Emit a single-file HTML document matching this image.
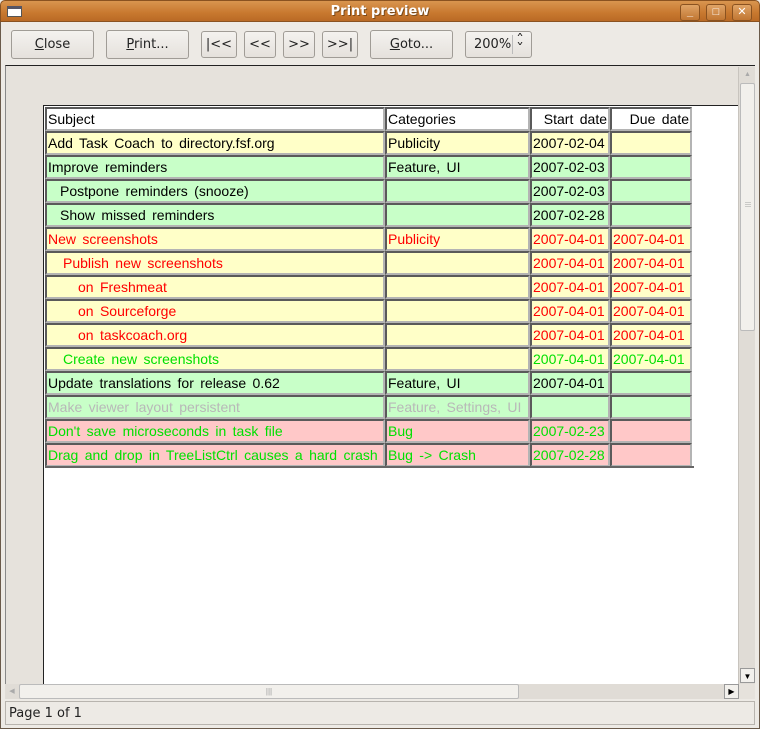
<!DOCTYPE html>
<html><head><meta charset="utf-8"><style>
*{margin:0;padding:0;box-sizing:border-box}
body{width:760px;height:729px;background:#edeae5;font-family:"Liberation Sans","DejaVu Sans",sans-serif;position:relative;overflow:hidden}
.abs{position:absolute}
#title{left:0;top:0;width:760px;height:22px;background:linear-gradient(#d9954f,#c8782f 60%,#b96a25);border-radius:5px 5px 0 0;border:1px solid #8a5220}
#title .t{position:absolute;left:0;right:0;top:3px;text-align:center;color:#fff;font-weight:bold;font-size:13px;font-family:"DejaVu Sans",sans-serif;text-shadow:1px 1px 0 #7a4a1a}
.wb{position:absolute;top:3px;width:20px;height:17px;border:1px solid #8a5220;border-radius:3px;background:linear-gradient(#e0a466,#c17632);color:#fff;font-size:11px;text-align:center;line-height:15px;font-weight:bold}
.btn{position:absolute;top:30px;height:29px;border:1px solid #a09c96;border-radius:3px;background:linear-gradient(#f4f2ef,#e5e1dc);font-size:13px;font-family:"DejaVu Sans",sans-serif;text-align:center;line-height:27px;color:#222}
#scrollarea{left:5px;top:65px;width:750px;height:634px;background:#e6e2dc;border-top:1px solid #222;border-left:1px solid #888}
#page{left:43px;top:105px;width:697px;height:579px;background:#fff;border-left:1px solid #222;border-top:1px solid #222}
.c{position:absolute;height:24px;border-top:2px solid #5a5a5a;border-left:2px solid #5a5a5a;border-bottom:2px solid #b4b4b4;border-right:2px solid #b4b4b4;font-size:14px;line-height:21px;word-spacing:2.5px;white-space:nowrap;overflow:hidden;padding-left:1px}
.r{text-align:right;padding-right:1px;padding-left:0}
.y{background:#ffffc8}.g{background:#c8ffc8}.p{background:#ffc8c8}.w{background:#fff}
.red{color:#f00}.grn{color:#00e000}.gry{color:#b8b8b8}
#vs{left:738px;top:67px;width:17px;height:617px;background:#e0dcd6;border-left:1px solid #c8c4be}
#hs{left:5px;top:684px;width:733px;height:15px;background:#e0dcd6}
#status{left:5px;top:701px;width:750px;height:24px;border:1px solid #b8b4ae;font-size:13px;font-family:"DejaVu Sans",sans-serif;padding:4px 0 0 3px;color:#222}
</style></head><body>
<div id="title" class="abs"><div style="position:absolute;left:6px;top:5px;width:15px;height:11px;background:#fff;border:1px solid #555;border-top:3px solid #556"></div><div class="t">Print preview</div>
<div class="wb" style="left:679px">_</div><div class="wb" style="left:705px">□</div><div class="wb" style="left:731px">✕</div></div>
<div class="abs" style="left:0;top:22px;width:1px;height:707px;background:#6a5a4a"></div>
<div class="abs" style="left:759px;top:22px;width:1px;height:707px;background:#6a5a4a"></div>
<div class="abs" style="left:0;top:728px;width:760px;height:1px;background:#6a5a4a"></div>
<div class="btn" style="left:11px;width:83px"><u>C</u>lose</div>
<div class="btn" style="left:106px;width:83px"><u>P</u>rint...</div>
<div class="btn" style="left:201px;width:36px;top:31px;height:27px;line-height:25px">|&lt;&lt;</div>
<div class="btn" style="left:244px;width:32px;top:31px;height:27px;line-height:25px">&lt;&lt;</div>
<div class="btn" style="left:283px;width:32px;top:31px;height:27px;line-height:25px">&gt;&gt;</div>
<div class="btn" style="left:322px;width:36px;top:31px;height:27px;line-height:25px">&gt;&gt;|</div>
<div class="btn" style="left:370px;width:83px"><u>G</u>oto...</div>
<div class="btn" style="left:465px;width:67px;top:31px;height:27px;line-height:25px;text-align:left;padding-left:8px">200%<span style="position:absolute;left:46px;top:3px;height:19px;border-left:1px solid #bbb"></span><span style="position:absolute;left:51px;top:3px;font-size:12px;line-height:9px;transform:scaleX(1.3)">˄<br>˅</span></div>
<div id="scrollarea" class="abs"></div>
<div id="page" class="abs"></div>
<div id="vs" class="abs"><div style="position:absolute;left:1px;top:0;width:15px;height:16px;font-size:7px;color:#aaa;text-align:center;line-height:16px">▲</div><div style="position:absolute;left:1px;top:16px;width:15px;height:248px;background:#f2f0ec;border:1px solid #bbb;border-radius:2px"><div style="position:absolute;top:118px;left:4px;width:6px;font-size:6px;color:#999;line-height:2px">―<br>―<br>―</div></div><div style="position:absolute;left:1px;top:601px;width:15px;height:15px;font-size:8px;text-align:center;line-height:15px;background:#f2f0ec;border:1px solid #999">▼</div></div>
<div id="hs" class="abs"><div style="position:absolute;left:0;top:0;width:14px;height:15px;font-size:7px;color:#aaa;line-height:15px;text-align:center">◀</div><div style="position:absolute;left:14px;top:0;width:500px;height:15px;background:#f2f0ec;border:1px solid #bbb;border-radius:2px;text-align:center;font-size:8px;color:#999;line-height:13px">|||</div><div style="position:absolute;left:719px;top:0;width:15px;height:15px;background:#f2f0ec;border:1px solid #999;font-size:8px;line-height:13px;text-align:center">▶</div></div>
<div id="status" class="abs">Page 1 of 1</div>

<div class="c w" style="left:45px;top:107px;width:340px">Subject</div>
<div class="c w" style="left:385px;top:107px;width:145px">Categories</div>
<div class="c w r" style="left:530px;top:107px;width:80px">Start date</div>
<div class="c w r" style="left:610px;top:107px;width:82px">Due date</div>

<div class="c y" style="left:45px;top:131px;width:340px">Add Task Coach to directory.fsf.org</div>
<div class="c y" style="left:385px;top:131px;width:145px">Publicity</div>
<div class="c y" style="left:530px;top:131px;width:80px">2007-02-04</div>
<div class="c y" style="left:610px;top:131px;width:82px"></div>

<div class="c g" style="left:45px;top:155px;width:340px">Improve reminders</div>
<div class="c g" style="left:385px;top:155px;width:145px">Feature, UI</div>
<div class="c g" style="left:530px;top:155px;width:80px">2007-02-03</div>
<div class="c g" style="left:610px;top:155px;width:82px"></div>

<div class="c g" style="left:45px;top:179px;width:340px;padding-left:13px">Postpone reminders (snooze)</div>
<div class="c g" style="left:385px;top:179px;width:145px"></div>
<div class="c g" style="left:530px;top:179px;width:80px">2007-02-03</div>
<div class="c g" style="left:610px;top:179px;width:82px"></div>

<div class="c g" style="left:45px;top:203px;width:340px;padding-left:13px">Show missed reminders</div>
<div class="c g" style="left:385px;top:203px;width:145px"></div>
<div class="c g" style="left:530px;top:203px;width:80px">2007-02-28</div>
<div class="c g" style="left:610px;top:203px;width:82px"></div>

<div class="c y red" style="left:45px;top:227px;width:340px">New screenshots</div>
<div class="c y red" style="left:385px;top:227px;width:145px">Publicity</div>
<div class="c y red" style="left:530px;top:227px;width:80px">2007-04-01</div>
<div class="c y red" style="left:610px;top:227px;width:82px">2007-04-01</div>

<div class="c y red" style="left:45px;top:251px;width:340px;padding-left:16px">Publish new screenshots</div>
<div class="c y" style="left:385px;top:251px;width:145px"></div>
<div class="c y red" style="left:530px;top:251px;width:80px">2007-04-01</div>
<div class="c y red" style="left:610px;top:251px;width:82px">2007-04-01</div>

<div class="c y red" style="left:45px;top:275px;width:340px;padding-left:31px">on Freshmeat</div>
<div class="c y" style="left:385px;top:275px;width:145px"></div>
<div class="c y red" style="left:530px;top:275px;width:80px">2007-04-01</div>
<div class="c y red" style="left:610px;top:275px;width:82px">2007-04-01</div>

<div class="c y red" style="left:45px;top:299px;width:340px;padding-left:31px">on Sourceforge</div>
<div class="c y" style="left:385px;top:299px;width:145px"></div>
<div class="c y red" style="left:530px;top:299px;width:80px">2007-04-01</div>
<div class="c y red" style="left:610px;top:299px;width:82px">2007-04-01</div>

<div class="c y red" style="left:45px;top:323px;width:340px;padding-left:31px">on taskcoach.org</div>
<div class="c y" style="left:385px;top:323px;width:145px"></div>
<div class="c y red" style="left:530px;top:323px;width:80px">2007-04-01</div>
<div class="c y red" style="left:610px;top:323px;width:82px">2007-04-01</div>

<div class="c y grn" style="left:45px;top:347px;width:340px;padding-left:16px">Create new screenshots</div>
<div class="c y" style="left:385px;top:347px;width:145px"></div>
<div class="c y grn" style="left:530px;top:347px;width:80px">2007-04-01</div>
<div class="c y grn" style="left:610px;top:347px;width:82px">2007-04-01</div>

<div class="c g" style="left:45px;top:371px;width:340px">Update translations for release 0.62</div>
<div class="c g" style="left:385px;top:371px;width:145px">Feature, UI</div>
<div class="c g" style="left:530px;top:371px;width:80px">2007-04-01</div>
<div class="c g" style="left:610px;top:371px;width:82px"></div>

<div class="c g gry" style="left:45px;top:395px;width:340px">Make viewer layout persistent</div>
<div class="c g gry" style="left:385px;top:395px;width:145px">Feature, Settings, UI</div>
<div class="c g" style="left:530px;top:395px;width:80px"></div>
<div class="c g" style="left:610px;top:395px;width:82px"></div>

<div class="c p grn" style="left:45px;top:419px;width:340px">Don't save microseconds in task file</div>
<div class="c p grn" style="left:385px;top:419px;width:145px">Bug</div>
<div class="c p grn" style="left:530px;top:419px;width:80px">2007-02-23</div>
<div class="c p" style="left:610px;top:419px;width:82px"></div>

<div class="c p grn" style="left:45px;top:443px;width:340px">Drag and drop in TreeListCtrl causes a hard crash</div>
<div class="c p grn" style="left:385px;top:443px;width:145px">Bug -&gt; Crash</div>
<div class="c p grn" style="left:530px;top:443px;width:80px">2007-02-28</div>
<div class="c p" style="left:610px;top:443px;width:82px"></div>
<div class="abs" style="left:45px;top:466px;width:649px;height:2px;background:#666"></div>
</body></html>
